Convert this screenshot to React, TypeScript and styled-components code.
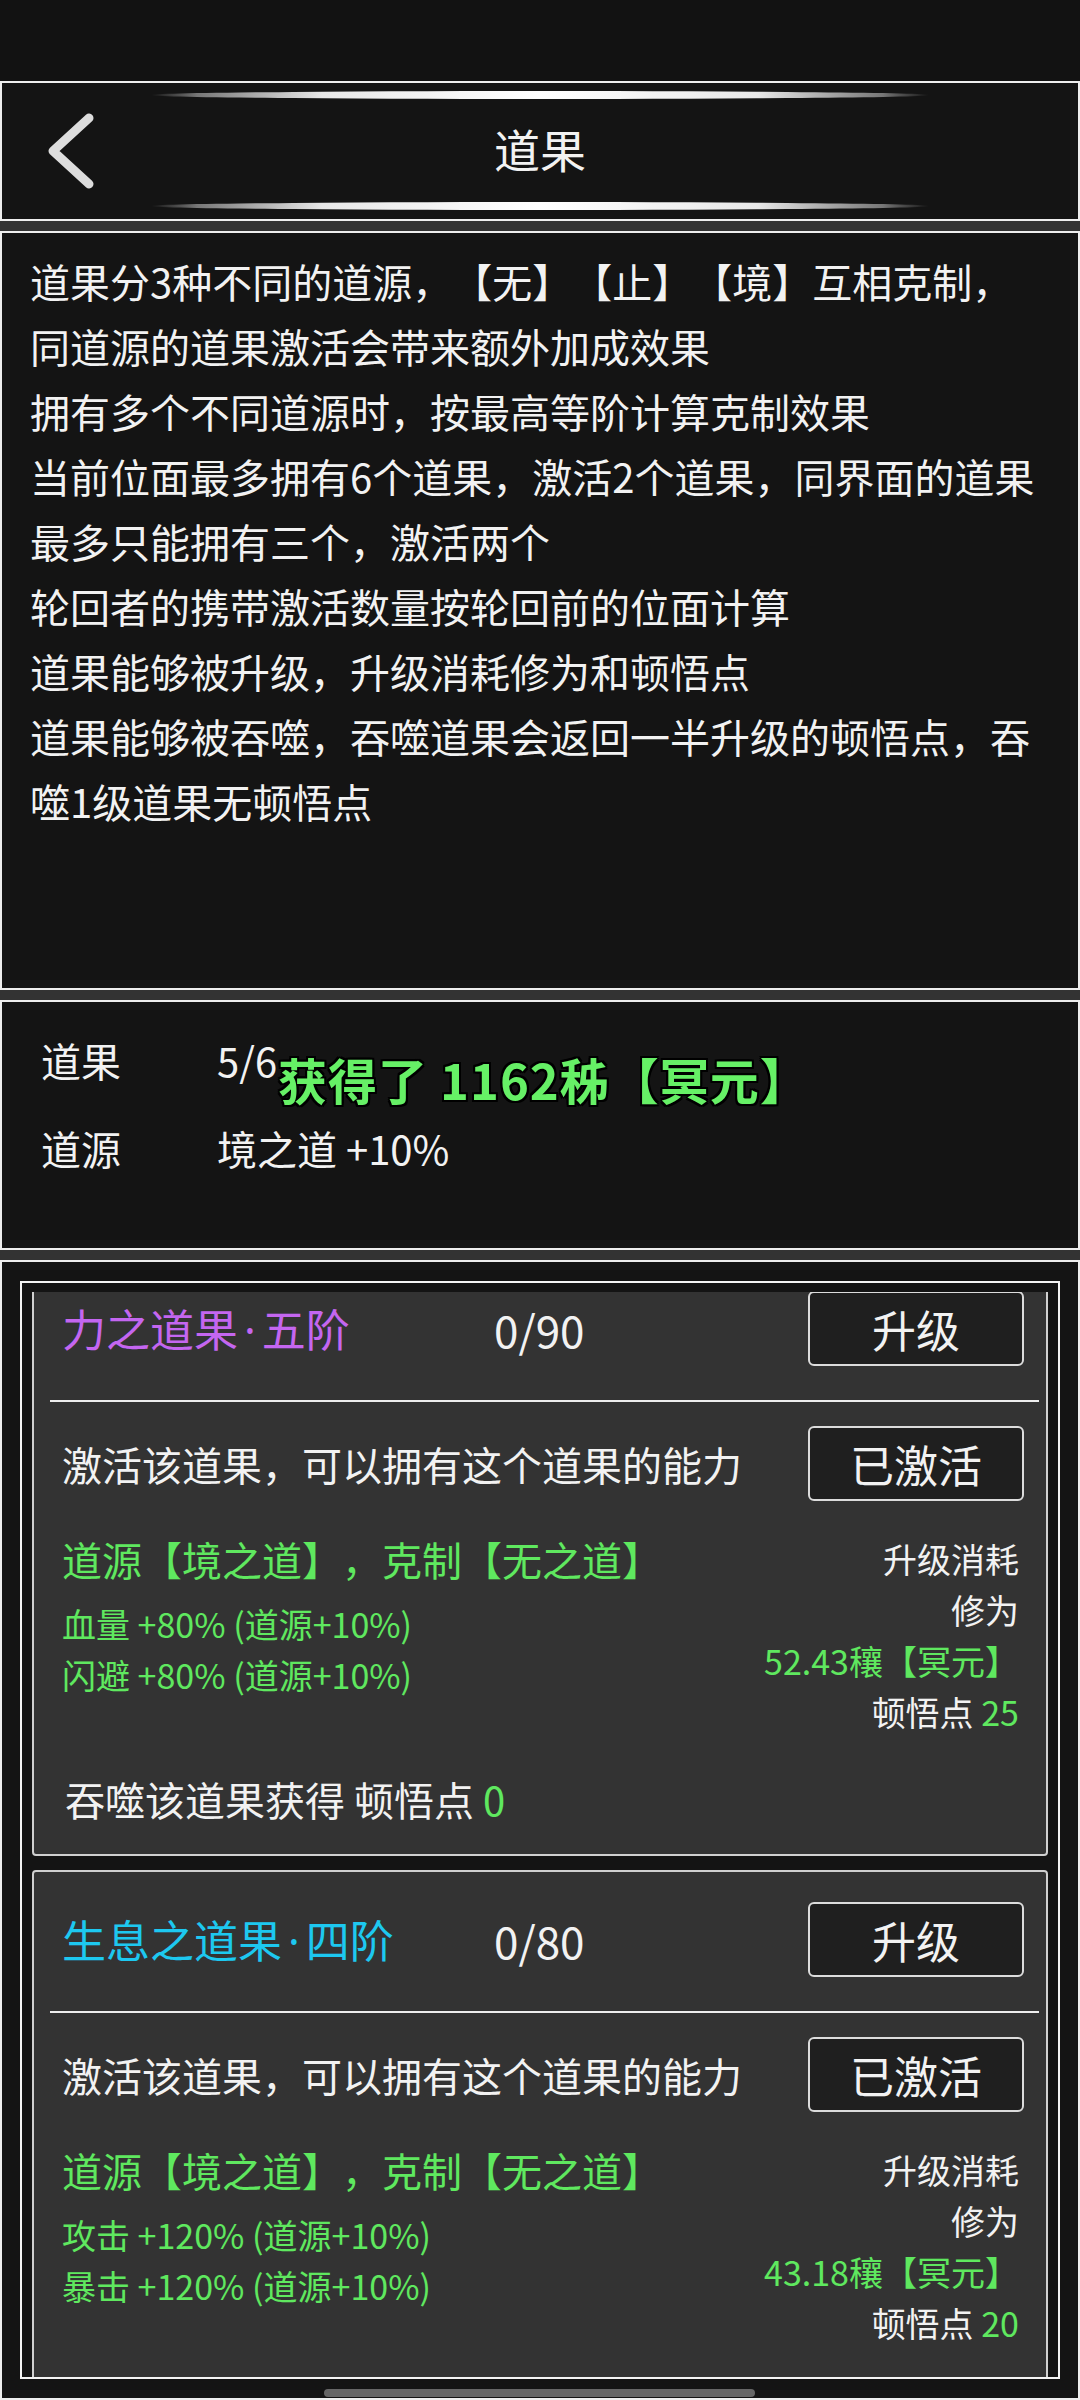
import React from 'react';
import styled, { createGlobalStyle } from 'styled-components';

const colors = {
    page: '#333333',
    panel: '#141414',
    status: '#121212',
    border: '#eeeeee',
    card: '#333333',
    white: '#f2f2f2',
    green: '#5fe85f',
    toast: '#66f066',
    button: '#1f1f1f',
};

const GlobalStyle = createGlobalStyle`
    * { box-sizing: border-box; }
    body {
        margin: 0;
        background: ${colors.page};
        font-family: "Noto Sans CJK SC", "Noto Sans", sans-serif;
        color: ${colors.white};
        text-spacing-trim: space-all;
    }
`;

const Page = styled.div`
    position: relative;
    width: 1080px;
    height: 2400px;
    overflow: hidden;
    display: flex;
    flex-direction: column;
    gap: 10px;
    background: ${colors.page};
`;

const StatusArea = styled.div`
    height: 81px;
    margin-bottom: -10px;
    background: ${colors.status};
`;

const Panel = styled.section<{ $height?: number }>`
    position: relative;
    border: 2px solid ${colors.border};
    background: ${colors.panel};
    ${({ $height }) => ($height ? `height: ${$height}px; flex-shrink: 0;` : 'flex: 1; min-height: 0;')}
`;

const Header = styled(Panel)`
    display: flex;
    flex-direction: column;
    align-items: center;
    padding: 8px 0 9px;
`;

const Deco = styled.div`
    width: 778px;
    height: 8px;
    border-radius: 50%;
    background: linear-gradient(90deg, rgba(90,90,90,0) 0%, #777 6%, #e8e8e8 22%, #ffffff 50%, #e8e8e8 78%, #777 94%, rgba(90,90,90,0) 100%);
`;

const TitleRow = styled.div`
    flex: 1;
    width: 100%;
    display: grid;
    grid-template-columns: 1fr auto 1fr;
    align-items: center;
`;

const BackButton = styled.button`
    justify-self: start;
    margin-left: 44px;
    padding: 0;
    border: none;
    background: none;
    display: flex;
`;

const PageTitle = styled.h1`
    margin: 0 0 5px;
    font-size: 46px;
    font-weight: 400;
    line-height: 60px;
    color: ${colors.white};
`;

const Description = styled(Panel)`
    padding: 16px 28px 0 28px;
`;

const Para = styled.p`
    margin: 0;
    font-size: 40px;
    line-height: 65px;
    color: ${colors.white};
`;

const Stats = styled(Panel)`
    display: grid;
    grid-template-columns: 176px 1fr;
    grid-auto-rows: 60px;
    row-gap: 28px;
    align-content: start;
    padding: 28px 0 0 39px;
`;

const StatLabel = styled.span`
    font-size: 40px;
    line-height: 60px;
`;

const Toast = styled.div`
    position: absolute;
    left: 276px;
    top: 47px;
    font-size: 49px;
    font-weight: 700;
    letter-spacing: 1px;
    line-height: 60px;
    color: ${colors.toast};
    white-space: pre;
    text-shadow: -2px -2px 0 #000, 2px -2px 0 #000, -2px 2px 0 #000, 2px 2px 0 #000, 0 2px 0 #000, 0 -2px 0 #000, 2px 0 0 #000, -2px 0 0 #000;
`;

const ListPanel = styled(Panel)`
    display: flex;
    flex-direction: column;
    padding: 19px 18px;
`;

const Frame = styled.div`
    flex: 1;
    display: flex;
    flex-direction: column;
    border: 2px solid #f4f4f4;
    padding: 9px 10px 0;
    min-height: 0;
`;

const Viewport = styled.div`
    flex: 1;
    overflow: hidden;
`;

const CardList = styled.div<{ $scroll: number }>`
    display: flex;
    flex-direction: column;
    gap: 14px;
    margin-top: ${({ $scroll }) => -$scroll}px;
`;

const Card = styled.article`
    border: 2px solid #d0d0d0;
    border-radius: 4px;
    background: ${colors.card};
    padding: 30px 22px 25px 28px;
`;

const CardHead = styled.div`
    display: grid;
    grid-template-columns: 432px 1fr auto;
    align-items: center;
`;

const CardTitle = styled.span<{ $color: string }>`
    font-size: 44px;
    line-height: 60px;
    color: ${({ $color }) => $color};
`;

const Dot = styled.span`
    font-family: "Noto Sans", sans-serif;
    margin: 0 6px;
`;

const Progress = styled.span`
    font-size: 44px;
    line-height: 60px;
`;

const ActionButton = styled.button`
    width: 216px;
    height: 75px;
    border: 2px solid #dcdcdc;
    border-radius: 6px;
    background: ${colors.button};
    color: ${colors.white};
    font-family: inherit;
    font-size: 44px;
    line-height: 1;
    padding: 0;
`;

const Separator = styled.hr`
    margin: 34px -15px 0 -12px;
    height: 2px;
    border: none;
    background: #eeeeee;
`;

const ActivateRow = styled.div`
    margin-top: 24px;
    display: flex;
    align-items: center;
    justify-content: space-between;
`;

const BodyText = styled.span`
    font-size: 40px;
    line-height: 60px;
`;

const Body = styled.div`
    margin-top: 28px;
    display: flex;
    justify-content: space-between;
    align-items: flex-start;
`;

const Effects = styled.div`
    display: flex;
    flex-direction: column;
`;

const Origin = styled.span`
    font-size: 40px;
    line-height: 60px;
    color: ${colors.green};
    margin-bottom: 9px;
`;

const Line = styled.span<{ $green?: boolean }>`
    font-size: 34px;
    line-height: 51px;
    color: ${({ $green }) => ($green ? colors.green : colors.white)};
`;

const Cost = styled.div`
    display: flex;
    flex-direction: column;
    align-items: flex-end;
    padding: 4px 5px 0 0;
`;

const Green = styled.span`
    color: ${colors.green};
`;

const Devour = styled.div`
    margin-top: 32px;
    padding-left: 3px;
    font-size: 40px;
    line-height: 60px;
`;

const HomeBar = styled.div`
    position: absolute;
    left: 324px;
    bottom: 3px;
    width: 431px;
    height: 8px;
    border-radius: 4px;
    background: #666;
`;

interface Fruit {
    name: string;
    tier: string;
    color: string;
    progress: string;
    stats: string[];
    cost: string;
    points: number;
    devour: number;
}

const fruits: Fruit[] = [
    {
        name: '力之道果',
        tier: '五阶',
        color: '#c466f0',
        progress: '0/90',
        stats: ['血量 +80% (道源+10%)', '闪避 +80% (道源+10%)'],
        cost: '52.43穰【冥元】',
        points: 25,
        devour: 0,
    },
    {
        name: '生息之道果',
        tier: '四阶',
        color: '#1dc8f0',
        progress: '0/80',
        stats: ['攻击 +120% (道源+10%)', '暴击 +120% (道源+10%)'],
        cost: '43.18穰【冥元】',
        points: 20,
        devour: 0,
    },
];

const rules = [
    '道果分3种不同的道源，【无】【止】【境】互相克制，',
    '同道源的道果激活会带来额外加成效果',
    '拥有多个不同道源时，按最高等阶计算克制效果',
    '当前位面最多拥有6个道果，激活2个道果，同界面的道果最多只能拥有三个，激活两个',
    '轮回者的携带激活数量按轮回前的位面计算',
    '道果能够被升级，升级消耗修为和顿悟点',
    '道果能够被吞噬，吞噬道果会返回一半升级的顿悟点，吞噬1级道果无顿悟点',
];

const FruitCard: React.FC<{ fruit: Fruit }> = ({ fruit }) => (
    <Card>
        <CardHead>
            <CardTitle $color={fruit.color}>
                {fruit.name}<Dot>·</Dot>{fruit.tier}
            </CardTitle>
            <Progress>{fruit.progress}</Progress>
            <ActionButton>升级</ActionButton>
        </CardHead>
        <Separator />
        <ActivateRow>
            <BodyText>激活该道果，可以拥有这个道果的能力</BodyText>
            <ActionButton>已激活</ActionButton>
        </ActivateRow>
        <Body>
            <Effects>
                <Origin>道源【境之道】，克制【无之道】</Origin>
                {fruit.stats.map((s) => (
                    <Line $green key={s}>{s}</Line>
                ))}
            </Effects>
            <Cost>
                <Line>升级消耗</Line>
                <Line>修为</Line>
                <Line $green>{fruit.cost}</Line>
                <Line>顿悟点 <Green>{fruit.points}</Green></Line>
            </Cost>
        </Body>
        <Devour>吞噬该道果获得 顿悟点 <Green>{fruit.devour}</Green></Devour>
    </Card>
);

const App: React.FC = () => (
    <Page>
        <GlobalStyle />
        <StatusArea />
        <Header $height={140}>
            <Deco />
            <TitleRow>
                <BackButton aria-label="返回">
                    <svg width="50" height="76" viewBox="0 0 50 76">
                        <polyline points="43,5 7,38 43,71" fill="none" stroke="#dddddd" strokeWidth="9" strokeLinecap="round" strokeLinejoin="round" />
                    </svg>
                </BackButton>
                <PageTitle>道果</PageTitle>
            </TitleRow>
            <Deco />
        </Header>
        <Description $height={759}>
            {rules.map((r) => (
                <Para key={r}>{r}</Para>
            ))}
        </Description>
        <Stats $height={250}>
            <StatLabel>道果</StatLabel>
            <StatLabel>5/6</StatLabel>
            <StatLabel>道源</StatLabel>
            <StatLabel>境之道 +10%</StatLabel>
            <Toast>获得了 1162秭【冥元】</Toast>
        </Stats>
        <ListPanel>
            <Frame>
                <Viewport>
                    <CardList $scroll={33}>
                        {fruits.map((f) => (
                            <FruitCard fruit={f} key={f.name} />
                        ))}
                    </CardList>
                </Viewport>
            </Frame>
        </ListPanel>
        <HomeBar />
    </Page>
);

export default App;
